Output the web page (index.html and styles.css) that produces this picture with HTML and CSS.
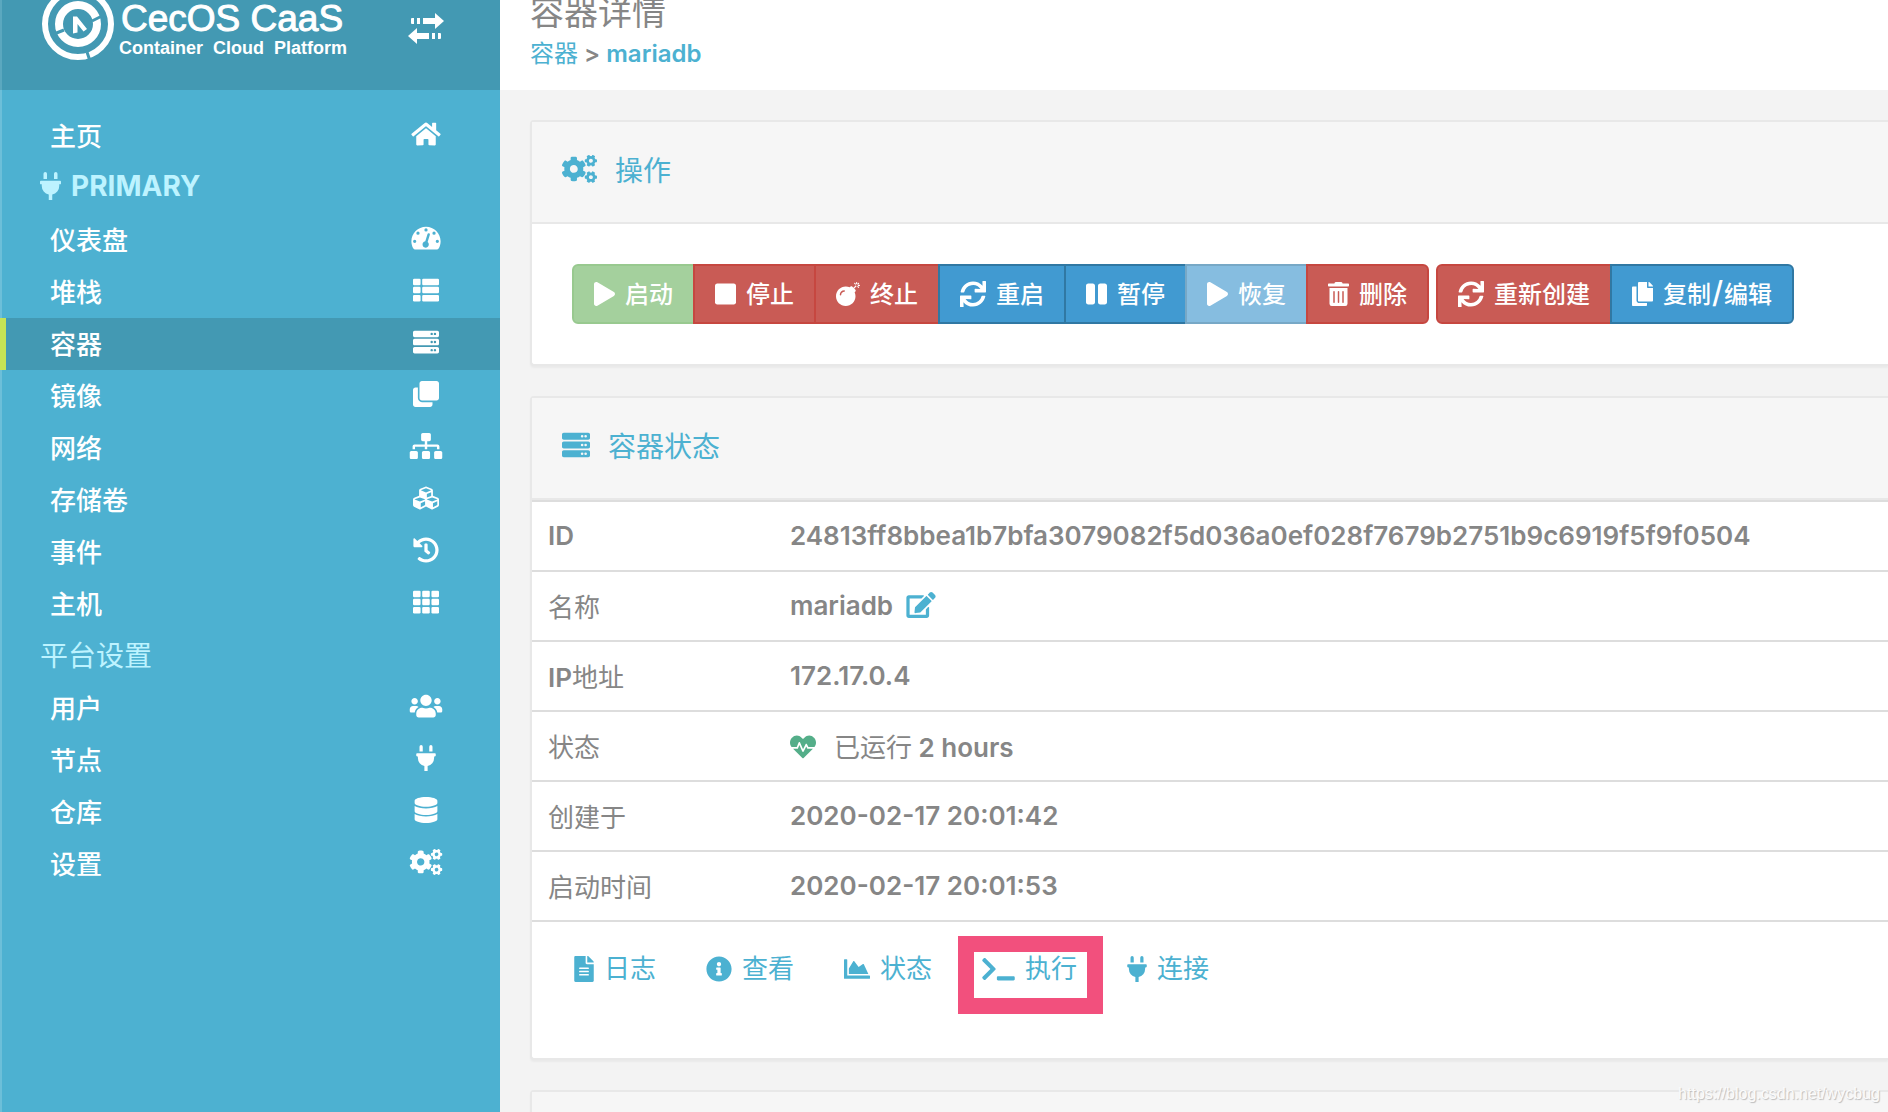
FILE: index.html
```html
<!DOCTYPE html>
<html lang="zh-CN">
<head>
<meta charset="utf-8">
<title>容器详情</title>
<link rel="stylesheet" href="styles.css">
</head>
<body>
<svg class="sprite" aria-hidden="true">
  <symbol id="home" viewBox="0 0 576 512"><path d="M280.37 148.26L96 300.11V464a16 16 0 0 0 16 16l112.06-.29a16 16 0 0 0 15.92-16V368a16 16 0 0 1 16-16h64a16 16 0 0 1 16 16v95.64a16 16 0 0 0 16 16.05L464 480a16 16 0 0 0 16-16V300L295.67 148.26a12.19 12.19 0 0 0-15.3 0zM571.6 251.47L488 182.56V44.05a12 12 0 0 0-12-12h-56a12 12 0 0 0-12 12v72.61L318.47 43a48 48 0 0 0-61 0L4.34 251.47a12 12 0 0 0-1.6 16.9l25.5 31A12 12 0 0 0 45.15 301l235.22-193.74a12.19 12.19 0 0 1 15.3 0L530.9 301a12 12 0 0 0 16.9-1.6l25.5-31a12 12 0 0 0-1.7-16.93z"/></symbol>
  <symbol id="plug" viewBox="0 0 384 512"><path d="M320 32a32 32 0 0 0-64 0v96h64zm48 128H16a16 16 0 0 0-16 16v32a16 16 0 0 0 16 16h16v32a160.07 160.07 0 0 0 128 156.8V512h64v-99.2A160.07 160.07 0 0 0 352 256v-32h16a16 16 0 0 0 16-16v-32a16 16 0 0 0-16-16zM128 32a32 32 0 0 0-64 0v96h64z"/></symbol>
  <symbol id="gauge" viewBox="0 0 576 512"><path fill-rule="evenodd" d="M288 32C128.94 32 0 160.94 0 320c0 52.8 14.25 102.26 39.06 144.8 5.61 9.62 16.3 15.2 27.44 15.2h443c11.14 0 21.83-5.58 27.44-15.2C561.75 422.26 576 372.8 576 320c0-159.06-128.94-288-288-288zM256 96a32 32 0 1 0 64 0a32 32 0 1 0-64 0zM98 160a32 32 0 1 0 64 0a32 32 0 1 0-64 0zM414 160a32 32 0 1 0 64 0a32 32 0 1 0-64 0zM33 320a32 32 0 1 0 64 0a32 32 0 1 0-64 0zM479 320a32 32 0 1 0 64 0a32 32 0 1 0-64 0zM274 322L318 178a24 24 0 0 1 46 14L320 335a62 62 0 1 1-46-13z"/></symbol>
  <symbol id="list" viewBox="0 0 512 512"><rect y="32" width="149" height="128" rx="24"/><rect y="192" width="149" height="128" rx="24"/><rect y="352" width="149" height="128" rx="24"/><rect x="181" y="32" width="331" height="128" rx="24"/><rect x="181" y="192" width="331" height="128" rx="24"/><rect x="181" y="352" width="331" height="128" rx="24"/></symbol>
  <symbol id="server" viewBox="0 0 512 512"><path fill-rule="evenodd" d="M480 160H32c-17.7 0-32-14.3-32-32V64c0-17.7 14.3-32 32-32h448c17.7 0 32 14.3 32 32v64c0 17.7-14.3 32-32 32zM408 96a24 24 0 1 0 48 0a24 24 0 1 0-48 0zM344 96a24 24 0 1 0 48 0a24 24 0 1 0-48 0zM480 320H32c-17.7 0-32-14.3-32-32v-64c0-17.7 14.3-32 32-32h448c17.7 0 32 14.3 32 32v64c0 17.7-14.3 32-32 32zM408 256a24 24 0 1 0 48 0a24 24 0 1 0-48 0zM344 256a24 24 0 1 0 48 0a24 24 0 1 0-48 0zM480 480H32c-17.7 0-32-14.3-32-32v-64c0-17.7 14.3-32 32-32h448c17.7 0 32 14.3 32 32v64c0 17.7-14.3 32-32 32zM408 416a24 24 0 1 0 48 0a24 24 0 1 0-48 0zM344 416a24 24 0 1 0 48 0a24 24 0 1 0-48 0z"/></symbol>
  <symbol id="clone" viewBox="0 0 512 512"><path d="M464 0c26.51 0 48 21.49 48 48v288c0 26.51-21.49 48-48 48H176c-26.51 0-48-21.49-48-48V48c0-26.51 21.49-48 48-48h288M176 416c-44.112 0-80-35.888-80-80V128H48c-26.51 0-48 21.49-48 48v288c0 26.51 21.49 48 48 48h288c26.51 0 48-21.49 48-48v-48H176z"/></symbol>
  <symbol id="sitemap" viewBox="0 0 640 512"><path d="M128 352H32c-17.67 0-32 14.33-32 32v96c0 17.67 14.33 32 32 32h96c17.67 0 32-14.33 32-32v-96c0-17.67-14.33-32-32-32zm-24-80h192v48h48v-48h192v48h48v-57.59c0-21.17-17.23-38.41-38.41-38.41H344v-64h40c17.67 0 32-14.33 32-32V32c0-17.67-14.33-32-32-32H256c-17.67 0-32 14.33-32 32v96c0 17.67 14.33 32 32 32h40v64H94.41C73.23 224 56 241.23 56 262.41V320h48v-48zm264 80h-96c-17.67 0-32 14.33-32 32v96c0 17.67 14.33 32 32 32h96c17.67 0 32-14.33 32-32v-96c0-17.67-14.33-32-32-32zm240 0h-96c-17.67 0-32 14.33-32 32v96c0 17.67 14.33 32 32 32h96c17.67 0 32-14.33 32-32v-96c0-17.67-14.33-32-32-32z"/></symbol>
  <symbol id="cubes" viewBox="0 0 512 512"><path d="M488.6 250.2L392 214V105.5c0-15-9.3-28.4-23.4-33.7l-100-37.5c-8.1-3.1-17.1-3.1-25.3 0l-100 37.5c-14.1 5.3-23.4 18.7-23.4 33.7V214l-96.6 36.2C9.3 255.5 0 268.9 0 283.9V394c0 13.6 7.7 26.1 19.9 32.2l100 50c10.1 5.1 22.1 5.1 32.2 0l103.9-52 103.9 52c10.1 5.1 22.1 5.1 32.2 0l100-50c12.2-6.1 19.9-18.6 19.9-32.2V283.9c0-15-9.3-28.4-23.4-33.7zM358 214.8l-85 31.9v-68.2l85-37v73.3zM154 104.1l102-38.2 102 38.2v.6l-102 41.4-102-41.4v-.6zm84 291.1l-85 42.5v-79.1l85-38.8v75.4zm0-112l-102 41.4-102-41.4v-.6l102-38.2 102 38.2v.6zm240 112l-85 42.5v-79.1l85-38.8v75.4zm0-112l-102 41.4-102-41.4v-.6l102-38.2 102 38.2v.6z"/></symbol>
  <symbol id="history" viewBox="0 0 512 512"><path d="M504 255.531c.253 136.64-111.18 248.372-247.82 248.468-59.015.042-113.223-20.53-155.822-54.911-11.077-8.94-11.905-25.541-1.839-35.607l11.267-11.267c8.609-8.609 22.353-9.551 31.891-1.984C173.062 425.135 212.781 440 256 440c101.705 0 184-82.311 184-184 0-101.705-82.311-184-184-184-48.814 0-93.149 18.969-126.068 49.932l50.754 50.754c10.08 10.08 2.941 27.314-11.313 27.314H24c-8.837 0-16-7.163-16-16V38.627c0-14.254 17.234-21.393 27.314-11.314l49.372 49.372C129.209 34.136 189.552 8 256 8c136.81 0 247.747 110.78 248 247.531zm-180.912 78.784l9.823-12.63c8.138-10.463 6.253-25.542-4.21-33.679L288 256.349V152c0-13.255-10.745-24-24-24h-16c-13.255 0-24 10.745-24 24v135.651l65.409 50.874c10.463 8.137 25.541 6.253 33.679-4.21z"/></symbol>
  <symbol id="grid" viewBox="0 0 512 512"><rect y="32" width="149" height="128" rx="24"/><rect y="192" width="149" height="128" rx="24"/><rect y="352" width="149" height="128" rx="24"/><rect x="181" y="32" width="149" height="128" rx="24"/><rect x="181" y="192" width="149" height="128" rx="24"/><rect x="181" y="352" width="149" height="128" rx="24"/><rect x="363" y="32" width="149" height="128" rx="24"/><rect x="363" y="192" width="149" height="128" rx="24"/><rect x="363" y="352" width="149" height="128" rx="24"/></symbol>
  <symbol id="users" viewBox="0 0 640 512"><path d="M96 224c35.3 0 64-28.7 64-64s-28.7-64-64-64-64 28.7-64 64 28.7 64 64 64zm448 0c35.3 0 64-28.7 64-64s-28.7-64-64-64-64 28.7-64 64 28.7 64 64 64zm32 32h-64c-17.6 0-33.5 7.1-45.1 18.6 40.3 22.1 68.9 62 75.1 109.4h66c17.7 0 32-14.3 32-32v-32c0-35.3-28.7-64-64-64zm-256 0c61.9 0 112-50.1 112-112S381.9 32 320 32 208 82.1 208 144s50.1 112 112 112zm76.8 32h-8.3c-20.8 10-43.9 16-68.5 16s-47.6-6-68.5-16h-8.3C179.6 288 128 339.6 128 403.2V432c0 26.5 21.5 48 48 48h288c26.5 0 48-21.5 48-48v-28.8c0-63.6-51.6-115.2-115.2-115.2zm-223.7-13.4C161.5 263.1 145.6 256 128 256H64c-35.3 0-64 28.7-64 64v32c0 17.7 14.3 32 32 32h65.9c6.3-47.4 34.9-87.3 75.2-109.4z"/></symbol>
  <symbol id="database" viewBox="0 0 448 512"><path d="M448 73.143v45.714C448 159.143 347.667 192 224 192S0 159.143 0 118.857V73.143C0 32.857 100.333 0 224 0s224 32.857 224 73.143zM448 176v102.857C448 319.143 347.667 352 224 352S0 319.143 0 278.857V176c48.125 33.143 136.208 48.572 224 48.572S399.874 209.143 448 176zm0 160v102.857C448 479.143 347.667 512 224 512S0 479.143 0 438.857V336c48.125 33.143 136.208 48.572 224 48.572S399.874 369.143 448 336z"/></symbol>
  <symbol id="cogs" viewBox="0 0 640 512"><path id="small-cog" d="M512.1 191l-8.2 14.3c-3 5.3-9.4 7.5-15.1 5.4-11.8-4.4-22.6-10.7-32.1-18.6-4.6-3.8-5.8-10.5-2.8-15.7l8.2-14.3c-6.9-8-12.3-17.3-15.9-27.4h-16.5c-6 0-11.2-4.3-12.2-10.3-2-12-2.1-24.6 0-37.1 1-6 6.2-10.4 12.2-10.4h16.5c3.6-10.1 9-19.4 15.9-27.4l-8.2-14.3c-3-5.2-1.9-11.9 2.8-15.7 9.5-7.9 20.4-14.2 32.1-18.6 5.7-2.1 12.1.1 15.1 5.4l8.2 14.3c10.5-1.9 21.2-1.9 31.7 0L552 6.3c3-5.3 9.4-7.5 15.1-5.4 11.8 4.4 22.6 10.7 32.1 18.6 4.6 3.8 5.8 10.5 2.8 15.7l-8.2 14.3c6.9 8 12.3 17.3 15.9 27.4h16.5c6 0 11.2 4.3 12.2 10.3 2 12 2.1 24.6 0 37.1-1 6-6.2 10.4-12.2 10.4h-16.5c-3.6 10.1-9 19.4-15.9 27.4l8.2 14.3c3 5.2 1.9 11.9-2.8 15.7-9.5 7.9-20.4 14.2-32.1 18.6-5.7 2.1-12.1-.1-15.1-5.4l-8.2-14.3c-10.4 1.9-21.2 1.9-31.7 0zm-10.5-58.8c38.5 29.6 82.4-14.3 52.8-52.8-38.5-29.7-82.4 14.3-52.8 52.8z"/><use href="#small-cog" transform="translate(0 299)"/><path d="M386.3 286.1l33.7 16.8c10.1 5.8 14.5 18.1 10.5 29.1-8.9 24.2-26.4 46.4-42.6 65.8-7.4 8.9-20.2 11.1-30.3 5.3l-29.1-16.8c-16 13.7-34.6 24.6-54.9 31.7v33.6c0 11.6-8.3 21.6-19.7 23.6-24.6 4.2-50.4 4.4-75.9 0-11.5-2-20-11.9-20-23.6V418c-20.3-7.2-38.9-18-54.9-31.7L74 403c-10 5.8-22.9 3.6-30.3-5.3-16.2-19.4-33.3-41.6-42.2-65.7-4-10.9.4-23.2 10.5-29.1l33.3-16.8c-3.9-20.9-3.9-42.4 0-63.4L12 205.8c-10.1-5.8-14.6-18.1-10.5-29 8.9-24.2 26-46.4 42.2-65.8 7.4-8.9 20.2-11.1 30.3-5.3l29.1 16.8c16-13.7 34.6-24.6 54.9-31.7V57.1c0-11.5 8.2-21.5 19.6-23.5 24.6-4.2 50.5-4.4 76-.1 11.5 2 20 11.9 20 23.6v33.6c20.3 7.2 38.9 18 54.9 31.7l29.1-16.8c10-5.8 22.9-3.6 30.3 5.3 16.2 19.4 33.2 41.6 42.1 65.8 4 10.9.1 23.2-10 29.1l-33.7 16.8c3.9 21 3.9 42.5 0 63.5zm-117.6 21.1c59.2-77-28.7-164.9-105.7-105.7-59.2 77 28.7 164.9 105.7 105.7z"/></symbol>
  <symbol id="play" viewBox="0 0 448 512"><path d="M424.4 214.7L72.4 6.6C43.8-10.3 0 6.1 0 47.9V464c0 37.5 40.7 60.1 72.4 41.3l352-208c31.4-18.5 31.5-64.1 0-82.6z"/></symbol>
  <symbol id="stop" viewBox="0 0 448 512"><path d="M400 32H48C21.5 32 0 53.5 0 80v352c0 26.5 21.5 48 48 48h352c26.5 0 48-21.5 48-48V80c0-26.5-21.5-48-48-48z"/></symbol>
  <symbol id="pause" viewBox="0 0 448 512"><path d="M144 479H48c-26.5 0-48-21.5-48-48V79c0-26.5 21.5-48 48-48h96c26.5 0 48 21.5 48 48v352c0 26.5-21.5 48-48 48zm304-48V79c0-26.5-21.5-48-48-48h-96c-26.5 0-48 21.5-48 48v352c0 26.5 21.5 48 48 48h96c26.5 0 48-21.5 48-48z"/></symbol>
  <symbol id="bomb" viewBox="0 0 512 512"><path d="M440.5 88.5l-52 52L415 167c9.4 9.4 9.4 24.6 0 33.9l-17.4 17.4c11.8 26.1 18.4 55.1 18.4 85.6 0 114.9-93.1 208-208 208S0 418.9 0 304 93.1 96 208 96c30.5 0 59.5 6.6 85.6 18.4L311 97c9.4-9.4 24.6-9.4 33.9 0l26.5 26.5 52-52 17.1 17zM500 60h-24c-6.6 0-12 5.4-12 12s5.4 12 12 12h24c6.6 0 12-5.4 12-12s-5.4-12-12-12zM440 0c-6.6 0-12 5.4-12 12v24c0 6.6 5.4 12 12 12s12-5.4 12-12V12c0-6.6-5.4-12-12-12zm33.9 55l17-17c4.7-4.7 4.7-12.3 0-17-4.7-4.7-12.3-4.7-17 0l-17 17c-4.7 4.7-4.7 12.3 0 17 4.8 4.7 12.4 4.7 17 0zm-67.8 0c4.7 4.7 12.3 4.7 17 0 4.7-4.7 4.7-12.3 0-17l-17-17c-4.7-4.7-12.3-4.7-17 0-4.7 4.7-4.7 12.3 0 17l17 17zm67.8 34c-4.7-4.7-12.3-4.7-17 0-4.7 4.7-4.7 12.3 0 17l17 17c4.7 4.7 12.3 4.7 17 0 4.7-4.7 4.7-12.3 0-17l-17-17zM112 272c0-35.3 28.7-64 64-64 8.8 0 16-7.2 16-16s-7.2-16-16-16c-52.9 0-96 43.1-96 96 0 8.8 7.2 16 16 16s16-7.2 16-16z"/></symbol>
  <symbol id="sync" viewBox="0 0 512 512"><path d="M440.65 12.57l4 82.77A247.16 247.16 0 0 0 255.83 8C134.73 8 33.91 94.92 12.29 209.82A12 12 0 0 0 24.09 224h49.05a12 12 0 0 0 11.67-9.26 175.91 175.91 0 0 1 317-56.94l-101.46-4.86a12 12 0 0 0-12.57 12v47.41a12 12 0 0 0 12 12H500a12 12 0 0 0 12-12V12a12 12 0 0 0-12-12h-47.37a12 12 0 0 0-11.98 12.57zM255.83 432a175.61 175.61 0 0 1-146-77.8l101.8 4.87a12 12 0 0 0 12.57-12v-47.4a12 12 0 0 0-12-12H12a12 12 0 0 0-12 12V500a12 12 0 0 0 12 12h47.35a12 12 0 0 0 12-12.6l-4.15-82.57A247.17 247.17 0 0 0 255.83 504c121.11 0 221.93-86.92 243.55-201.82a12 12 0 0 0-11.8-14.18h-49.05a12 12 0 0 0-11.67 9.26A175.86 175.86 0 0 1 255.83 432z"/></symbol>
  <symbol id="trash" viewBox="0 0 448 512"><path d="M32 464a48 48 0 0 0 48 48h288a48 48 0 0 0 48-48V128H32zm272-256a16 16 0 0 1 32 0v224a16 16 0 0 1-32 0zm-96 0a16 16 0 0 1 32 0v224a16 16 0 0 1-32 0zm-96 0a16 16 0 0 1 32 0v224a16 16 0 0 1-32 0zM432 32H312l-9.4-18.7A24 24 0 0 0 281.1 0H166.8a23.72 23.72 0 0 0-21.4 13.3L136 32H16A16 16 0 0 0 0 48v32a16 16 0 0 0 16 16h416a16 16 0 0 0 16-16V48a16 16 0 0 0-16-16z"/></symbol>
  <symbol id="copy" viewBox="0 0 448 512"><path d="M320 448v40c0 13.255-10.745 24-24 24H24c-13.255 0-24-10.745-24-24V120c0-13.255 10.745-24 24-24h72v296c0 30.879 25.121 56 56 56h168zm0-344V0H152c-13.255 0-24 10.745-24 24v368c0 13.255 10.745 24 24 24h272c13.255 0 24-10.745 24-24V128H344c-13.2 0-24-10.8-24-24zm120.971-31.029L375.029 7.029A24 24 0 0 0 358.059 0H352v96h96v-6.059a24 24 0 0 0-7.029-16.97z"/></symbol>
  <symbol id="edit" viewBox="0 0 576 512"><path d="M402.6 83.2l90.2 90.2c3.8 3.8 3.8 10 0 13.8L274.4 405.6l-92.8 10.3c-12.4 1.4-22.9-9.1-21.5-21.5l10.3-92.8L388.8 83.2c3.8-3.8 10-3.8 13.8 0zm162-22.9l-48.8-48.8c-15.2-15.2-39.9-15.2-55.2 0l-35.4 35.4c-3.8 3.8-3.8 10 0 13.8l90.2 90.2c3.8 3.8 10 3.8 13.8 0l35.4-35.4c15.2-15.3 15.2-40 0-55.2zM384 346.2V448H64V128h229.8c3.2 0 6.2-1.3 8.5-3.5l40-40c7.6-7.6 2.2-20.5-8.5-20.5H48C21.5 64 0 85.5 0 112v352c0 26.5 21.5 48 48 48h352c26.5 0 48-21.5 48-48V306.2c0-10.7-12.9-16-20.5-8.5l-40 40c-2.2 2.3-3.5 5.3-3.5 8.5z"/></symbol>
  <symbol id="heartbeat" viewBox="0 0 512 512"><path d="M320.2 243.8l-49.7 99.4c-6 12.1-23.4 11.7-28.9-.6l-56.9-126.3-30 71.7H60.6l182.5 186.5c7.1 7.3 18.6 7.3 25.7 0L451.4 288H342.3l-22.1-44.2zM473.7 73.9l-2.4-2.5c-51.5-52.6-135.8-52.6-187.4 0L256 100l-27.9-28.5c-51.5-52.7-135.9-52.7-187.4 0l-2.4 2.4C-10.4 123.7-12.5 203 31 256h102.4l35.9-86.2c5.4-12.9 23.6-13.1 29.4-.4l58.2 129.3 49-97.9c5.9-11.8 22.7-11.8 28.6 0l27.6 55.2H481c43.5-53 41.4-132.3-7.3-182.1z"/></symbol>
  <symbol id="file" viewBox="0 0 384 512"><path d="M224 136V0H24C10.7 0 0 10.7 0 24v464c0 13.3 10.7 24 24 24h336c13.3 0 24-10.7 24-24V160H248c-13.2 0-24-10.8-24-24zm64 236c0 6.6-5.4 12-12 12H108c-6.6 0-12-5.4-12-12v-8c0-6.6 5.4-12 12-12h168c6.6 0 12 5.4 12 12v8zm0-64c0 6.6-5.4 12-12 12H108c-6.6 0-12-5.4-12-12v-8c0-6.6 5.4-12 12-12h168c6.6 0 12 5.4 12 12v8zm0-72v8c0 6.6-5.4 12-12 12H108c-6.6 0-12-5.4-12-12v-8c0-6.6 5.4-12 12-12h168c6.6 0 12 5.4 12 12zm96-114.1v6.1H256V0h6.1c6.4 0 12.5 2.5 17 7l97.9 98c4.5 4.5 7 10.6 7 16.9z"/></symbol>
  <symbol id="info" viewBox="0 0 512 512"><path d="M256 8C119.043 8 8 119.083 8 256c0 136.997 111.043 248 248 248s248-111.003 248-248C504 119.083 392.957 8 256 8zm0 110c23.196 0 42 18.804 42 42s-18.804 42-42 42-42-18.804-42-42 18.804-42 42-42zm56 254c0 6.627-5.373 12-12 12h-88c-6.627 0-12-5.373-12-12v-24c0-6.627 5.373-12 12-12h12v-64h-12c-6.627 0-12-5.373-12-12v-24c0-6.627 5.373-12 12-12h64c6.627 0 12 5.373 12 12v100h12c6.627 0 12 5.373 12 12v24z"/></symbol>
  <symbol id="chart" viewBox="0 0 512 512"><path d="M500 384c6.6 0 12 5.4 12 12v40c0 6.6-5.4 12-12 12H12c-6.6 0-12-5.4-12-12V76c0-6.6 5.4-12 12-12h40c6.6 0 12 5.4 12 12v308h436zM372.7 159.5L288 216l-85.3-113.7c-5.1-6.8-15.5-6.3-19.9 1L96 248v104h384l-89.9-187.8c-3.2-6.5-11.4-8.7-17.4-4.7z"/></symbol>
  <symbol id="terminal" viewBox="0 0 640 512"><path d="M257.981 272.971L63.638 467.314c-9.373 9.373-24.569 9.373-33.941 0L7.029 444.647c-9.357-9.357-9.375-24.522-.04-33.901L161.011 256 6.99 101.255c-9.335-9.379-9.317-24.544.04-33.901l22.667-22.667c9.373-9.373 24.569-9.373 33.941 0L257.981 239.03c9.373 9.372 9.373 24.568 0 33.941zM640 456v-32c0-13.255-10.745-24-24-24H312c-13.255 0-24 10.745-24 24v32c0 13.255 10.745 24 24 24h304c13.255 0 24-10.745 24-24z"/></symbol>
</svg>

<div class="layout">
  <aside class="sidebar">
    <header class="brand">
      <svg class="brand-mark" viewBox="-37 -37 74 74" aria-hidden="true">
        <g fill="none" stroke="#fff">
          <circle r="33" stroke-width="6"/>
          <circle r="19" stroke-width="8"/>
        </g>
        <path d="M-5-7.500h4L9 5 5.500 7.500-.5 0V8.500L-5 9.500z" fill="#fff"/>
        <path d="M9 28l3 9M-24 10l10-4M14-3l10-5" fill="none" stroke="#4399b3" stroke-width="3"/>
      </svg>
      <div class="brand-text">
        <span class="brand-name">CecOS CaaS</span>
        <span class="brand-tag">Container&nbsp; Cloud&nbsp; Platform</span>
      </div>
      <button class="toggle" type="button" aria-label="切换菜单">
        <svg viewBox="0 0 36 32" width="36" height="32" aria-hidden="true"><path fill="#fff" d="M4 5h2v6H4q-1 0-1-1V6q0-1 1-1zM9 5h3v6H9zM15 5h12V0l9 8-9 8v-5H15zM32 20h-2v6h2q1 0 1-1v-4q0-1-1-1zM27 20h-3v6h3zM21 20H9v-5l-9 8 9 8v-5h12z"/></svg>
      </button>
    </header>
    <nav class="nav">
      <a class="nav-item" href="#">主页<span class="nav-icon"><svg class="icon"><use href="#home"/></svg></span></a>
      <div class="nav-title latin"><svg class="icon title-plug"><use href="#plug"/></svg>PRIMARY</div>
      <a class="nav-item" href="#">仪表盘<span class="nav-icon"><svg class="icon"><use href="#gauge"/></svg></span></a>
      <a class="nav-item" href="#">堆栈<span class="nav-icon"><svg class="icon"><use href="#list"/></svg></span></a>
      <a class="nav-item active" href="#">容器<span class="nav-icon"><svg class="icon"><use href="#server"/></svg></span></a>
      <a class="nav-item" href="#">镜像<span class="nav-icon"><svg class="icon"><use href="#clone"/></svg></span></a>
      <a class="nav-item" href="#">网络<span class="nav-icon"><svg class="icon"><use href="#sitemap"/></svg></span></a>
      <a class="nav-item" href="#">存储卷<span class="nav-icon"><svg class="icon"><use href="#cubes"/></svg></span></a>
      <a class="nav-item" href="#">事件<span class="nav-icon"><svg class="icon"><use href="#history"/></svg></span></a>
      <a class="nav-item" href="#">主机<span class="nav-icon"><svg class="icon"><use href="#grid"/></svg></span></a>
      <div class="nav-title">平台设置</div>
      <a class="nav-item" href="#">用户<span class="nav-icon"><svg class="icon"><use href="#users"/></svg></span></a>
      <a class="nav-item" href="#">节点<span class="nav-icon"><svg class="icon"><use href="#plug"/></svg></span></a>
      <a class="nav-item" href="#">仓库<span class="nav-icon"><svg class="icon"><use href="#database"/></svg></span></a>
      <a class="nav-item" href="#">设置<span class="nav-icon"><svg class="icon"><use href="#cogs"/></svg></span></a>
    </nav>
  </aside>

  <main class="main">
    <header class="topbar">
      <h1 class="page-title">容器详情</h1>
      <div class="breadcrumb"><a class="zh" href="#">容器</a> &gt; <a href="#">mariadb</a></div>
    </header>

    <div class="content">
      <section class="card">
        <h2 class="card-title"><svg class="icon wide"><use href="#cogs"/></svg>操作</h2>
        <div class="actions">
          <div class="btn-group">
            <button class="btn green" type="button"><svg class="icon narrow"><use href="#play"/></svg>启动</button>
            <button class="btn red" type="button"><svg class="icon narrow"><use href="#stop"/></svg>停止</button>
            <button class="btn red" type="button"><svg class="icon bomb"><use href="#bomb"/></svg>终止</button>
            <button class="btn blue" type="button"><svg class="icon"><use href="#sync"/></svg>重启</button>
            <button class="btn blue" type="button"><svg class="icon narrow"><use href="#pause"/></svg>暂停</button>
            <button class="btn pale" type="button"><svg class="icon narrow"><use href="#play"/></svg>恢复</button>
            <button class="btn red" type="button"><svg class="icon narrow"><use href="#trash"/></svg>删除</button>
          </div>
          <div class="btn-group">
            <button class="btn red" type="button"><svg class="icon"><use href="#sync"/></svg>重新创建</button>
            <button class="btn blue" type="button"><svg class="icon narrow"><use href="#copy"/></svg><span>复制<span class="slash">/</span>编辑</span></button>
          </div>
        </div>
      </section>

      <section class="card">
        <h2 class="card-title"><svg class="icon"><use href="#server"/></svg>容器状态</h2>
        <table class="details">
          <tr><th scope="row">ID</th><td>24813ff8bbea1b7bfa3079082f5d036a0ef028f7679b2751b9c6919f5f9f0504</td></tr>
          <tr><th scope="row"><span class="zh">名称</span></th><td>mariadb <a href="#" aria-label="编辑"><svg class="icon inline-edit"><use href="#edit"/></svg></a></td></tr>
          <tr><th scope="row">IP<span class="zh">地址</span></th><td>172.17.0.4</td></tr>
          <tr><th scope="row"><span class="zh">状态</span></th><td><svg class="icon heart"><use href="#heartbeat"/></svg><span class="zh">已运行</span> 2 hours</td></tr>
          <tr><th scope="row"><span class="zh">创建于</span></th><td>2020-02-17 20:01:42</td></tr>
          <tr><th scope="row"><span class="zh">启动时间</span></th><td>2020-02-17 20:01:53</td></tr>
        </table>
        <div class="links">
          <a href="#"><svg class="icon slim"><use href="#file"/></svg>日志</a>
          <a href="#"><svg class="icon"><use href="#info"/></svg>查看</a>
          <a href="#"><svg class="icon"><use href="#chart"/></svg>状态</a>
          <a class="marked" href="#"><svg class="icon wide"><use href="#terminal"/></svg>执行</a>
          <a href="#"><svg class="icon slim"><use href="#plug"/></svg>连接</a>
        </div>
      </section>

      <section class="card">
        <div class="card-title"></div>
      </section>
    </div>
  </main>
</div>
<div class="watermark">https://blog.csdn.net/wycbug</div>
</body>
</html>
```
FILE: styles.css
```css
* {
  box-sizing: border-box;
}

body {
  margin: 0;
  height: 100vh;
  overflow: hidden;
  position: relative;
  background: #f3f3f3;
  color: #868686;
  font-family: Inter, "Noto Sans CJK SC", sans-serif;
  font-size: 26px;
  font-weight: 600;
}

a {
  color: #4cb1d1;
  text-decoration: none;
}

.zh {
  font-weight: 400;
}

.sprite {
  display: none;
}

.icon {
  width: 1em;
  height: 1em;
  fill: currentColor;
  flex: none;
}

.layout {
  display: flex;
  height: 100%;
}

/* Sidebar */

.sidebar {
  width: 500px;
  flex: none;
  background: #4db1d1;
  box-shadow: inset 2px 0 #6cbfd9;
}

.brand {
  height: 90px;
  display: flex;
  align-items: flex-start;
  padding: 0 56px 0 41px;
  background: #4399b3;
  box-shadow: inset 2px 0 #5ba8bf;
  color: #fff;
}

.brand-mark {
  width: 74px;
  height: 74px;
  margin-top: -13px;
  flex: none;
}

.brand-text {
  display: flex;
  flex-direction: column;
  margin-left: 4px;
  font-family: "Liberation Sans", sans-serif;
  white-space: nowrap;
}

.brand-name {
  padding-left: 2px;
  font-size: 37px;
  line-height: 38px;
  font-weight: 400;
  -webkit-text-stroke: 1px #fff;
}

.brand-tag {
  font-size: 18px;
  line-height: 20px;
  font-weight: 700;
}

.toggle {
  margin: 13px 0 0 auto;
  padding: 0;
  border: 0;
  background: none;
  line-height: 0;
}

.nav {
  padding-top: 20px;
}

.nav-item,
.nav-title {
  height: 52px;
  display: flex;
  align-items: center;
  padding-bottom: 4px;
}

.nav-item {
  justify-content: space-between;
  padding-left: 50px;
  padding-right: 56px;
  color: #fff;
  font-weight: 500;
}

.nav-item.active {
  background: #4399b3;
  box-shadow: inset 6px 0 #c5e356;
}

.nav-icon .icon {
  display: block;
  width: 36px;
}

.nav-title {
  gap: 10px;
  padding-left: 40px;
  color: #bdf3ff;
  font-size: 28px;
  font-weight: 400;
}

.nav-title.latin {
  font-weight: 700;
}

.nav-title .title-plug {
  width: 21px;
}

/* Page header */

.main {
  flex: 1;
  min-width: 0;
}

.topbar {
  height: 90px;
  display: flex;
  flex-direction: column;
  justify-content: flex-end;
  padding: 0 30px 20px;
  background: #fff;
}

.page-title {
  margin: 0;
  font-size: 34px;
  line-height: 50px;
  font-weight: 400;
  flex: none;
}

.breadcrumb {
  font-size: 24px;
  line-height: 32px;
  flex: none;
}

.content {
  display: flex;
  flex-direction: column;
  gap: 30px;
  padding: 30px 0 0 30px;
}

/* Cards */

.card {
  border: 2px solid #e8e8e8;
  border-right: 0;
  border-radius: 4px 0 0 4px;
  background: #fff;
  box-shadow: 0 2px 2px rgba(0, 0, 0, 0.04);
}

.card-title {
  display: flex;
  align-items: center;
  gap: 18px;
  height: 102px;
  margin: 0;
  padding: 0 30px 6px;
  border-bottom: 2px solid #e8e8e8;
  background: #f6f6f6;
  color: #4cb1d1;
  font-size: 28px;
  font-weight: 400;
}

.card-title .wide {
  width: 35px;
}

.actions {
  display: flex;
  gap: 7px;
  padding: 40px;
}

.btn-group {
  display: flex;
}

.btn {
  display: flex;
  align-items: center;
  gap: 10px;
  height: 60px;
  padding: 0 20px 4px;
  border: 2px solid;
  color: #fff;
  font: inherit;
  font-size: 24px;
  font-weight: 500;
  white-space: nowrap;
}

.btn + .btn {
  margin-left: -2px;
}

.btn:first-child {
  border-radius: 6px 0 0 6px;
}

.btn:last-child {
  border-radius: 0 6px 6px 0;
}

.btn .icon {
  width: 26px;
  height: 26px;
  margin-top: 3px;
}

.btn .narrow {
  width: 21px;
  height: 24px;
}

.btn .bomb {
  width: 24px;
  height: 24px;
}

.slash {
  margin: 0 1px;
  font-size: 30px;
  line-height: 24px;
}

.green {
  background: #a4d09d;
  border-color: #98c98f;
}

.red {
  background: #c95b55;
  border-color: #c64740;
}

.blue {
  background: #419ad1;
  border-color: #3078a3;
}

.pale {
  background: #86bde0;
  border-color: #77a8c6;
}

/* Container details */

.details {
  width: 100%;
  border-spacing: 0;
}

.details th,
.details td {
  height: 70px;
  padding: 0 16px 2px;
  border-top: 2px solid #ddd;
  text-align: left;
  font-weight: 600;
  white-space: nowrap;
}

.details th {
  width: 242px;
}

.details tr:last-child > * {
  height: 72px;
  border-bottom: 2px solid #ddd;
}

.details .icon {
  vertical-align: -3px;
}

.details .inline-edit {
  width: 30px;
  margin-left: 6px;
}

.details .heart {
  margin-right: 18px;
  color: #54ae89;
}

.links {
  display: flex;
  gap: 50px;
  padding: 28px 42px 70px;
}

.links a {
  position: relative;
  display: flex;
  align-items: center;
  gap: 10px;
  line-height: 38px;
  font-weight: 400;
}

.links .slim {
  width: 20px;
}

.links .wide {
  width: 33px;
}

.marked::after {
  content: "";
  position: absolute;
  inset: -14px -26px -26px -24px;
  border: 16px solid #f2507d;
}

.watermark {
  position: absolute;
  right: 8px;
  bottom: 8px;
  font-family: "Liberation Sans", sans-serif;
  font-size: 16px;
  line-height: 20px;
  font-weight: 400;
  color: #fbfbfb;
  text-shadow: 1px 1px 1px #bbb;
}
```
